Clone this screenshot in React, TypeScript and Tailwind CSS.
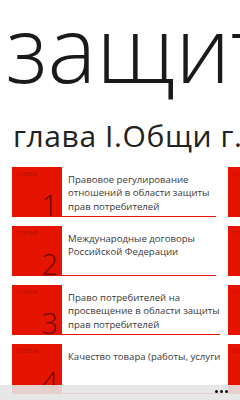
import React from "react";

const articles = [
  { n: 1, text: "Правовое регулирование|отношений в области защиты|прав потребителей" },
  { n: 2, text: "Международные договоры|Российской Федерации" },
  { n: 3, text: "Право потребителей на|просвещение в области защиты|прав потребителей" },
  { n: 4, text: "Качество товара (работы, услуги" },
];

function Tile({ n, text }: { n: number; text: string }) {
  return (
    <div className="flex h-[50px] w-[204px] shrink-0">
      <div className="flex h-[50px] w-[50px] shrink-0 flex-col justify-between bg-[#e51400] px-[4px]">
        <span className="pt-[3px] text-[7px] leading-[8px] text-[#b30e00]">статья</span>
        <span className="self-end text-[29px] font-light leading-[24px] text-[#6e0a00]">{n}</span>
      </div>
      <div className="flex-1 whitespace-nowrap border-b border-[#e51400] pl-[6px] pt-[6px] text-[9.6px] leading-[13.3px] text-[#3a3a3a]">
        {text.split("|").map((l, i) => (
          <div key={i}>{l}</div>
        ))}
      </div>
    </div>
  );
}

export default function App() {
  return (
    <div
      className="relative h-[400px] w-[240px] overflow-hidden bg-white"
      style={{ fontFamily: '"Open Sans", "Noto Sans", sans-serif' }}
    >
      <div className="ml-[6px] mt-[2px] whitespace-nowrap text-[92px] font-light leading-[92px] text-[#1a1a1a]">
        защита прав
      </div>
      <div className="ml-[13px] mt-[27px] whitespace-nowrap text-[30px] leading-[29px] tracking-[0.6px] text-[#222]">
        глава I.Общи г.
      </div>
      <div className="ml-[12px] mt-[17px] flex gap-[12px]">
        <div className="flex flex-col gap-[9px]">
          {articles.map((a) => (
            <Tile key={a.n} n={a.n} text={a.text} />
          ))}
        </div>
        <div className="flex flex-col gap-[9px]">
          {[5, 6, 7, 8].map((n) => (
            <Tile key={n} n={n} text="" />
          ))}
        </div>
      </div>
      <div className="absolute bottom-0 left-0 flex h-[15px] w-full items-start justify-end bg-[#e4e4e4]/90 pr-[12px] pt-[5px]">
        <div className="flex gap-[2px]">
          <span className="h-[3px] w-[3px] rounded-full bg-[#111]" />
          <span className="h-[3px] w-[3px] rounded-full bg-[#111]" />
          <span className="h-[3px] w-[3px] rounded-full bg-[#111]" />
        </div>
      </div>
    </div>
  );
}
